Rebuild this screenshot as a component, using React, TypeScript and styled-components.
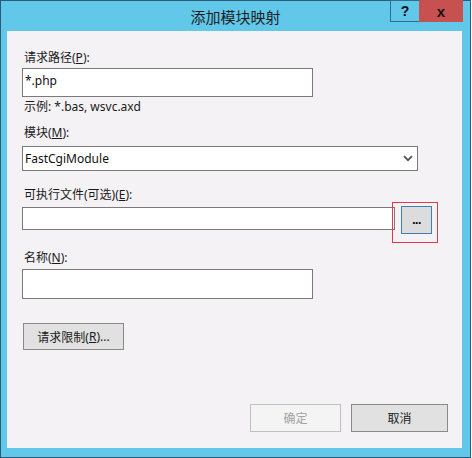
import React from "react";
import styled, { createGlobalStyle } from "styled-components";

const Global = createGlobalStyle`
  html, body { margin: 0; padding: 0; background: #ffffff; }
  body { font-family: "Noto Sans", "Noto Sans CJK SC", sans-serif; }
`;

const Window = styled.div`
  box-sizing: border-box;
  width: 471px;
  height: 458px;
  border: 1px solid #2d5a74;
  background: #61c8ea;
  display: flex;
  flex-direction: column;
  padding: 0 8px 9px 6px;
`;

const TitleBar = styled.div`
  height: 30px;
  flex: none;
  display: grid;
  grid-template-columns: 1fr auto 1fr;
  margin-right: -1px;
`;

const Title = styled.div`
  grid-column: 2;
  align-self: center;
  font-family: "Noto Sans CJK SC", sans-serif;
  font-size: 15px;
  color: #1e1e1e;
  padding-top: 1px;
  margin-left: 1px;
`;

const Caption = styled.div`
  grid-column: 3;
  justify-self: end;
  align-self: start;
  display: flex;
  margin-top: -1px;
`;

const CaptionButton = styled.div<{ $close?: boolean }>`
  box-sizing: border-box;
  width: ${(p) => (p.$close ? "44px" : "29px")};
  height: 22px;
  display: flex;
  align-items: center;
  justify-content: center;
  background: ${(p) => (p.$close ? "#c75050" : "transparent")};
  border: 1px solid ${(p) => (p.$close ? "#c75050" : "#2f6e8c")};
  border-right: ${(p) => (p.$close ? "1px solid #c75050" : "none")};
  font-family: "Liberation Sans", sans-serif;
  font-weight: bold;
  font-size: ${(p) => (p.$close ? "15px" : "14px")};
  color: #111111;
  line-height: 1;
`;

const Content = styled.div`
  flex: 1;
  background: #f4f2f5;
  display: flex;
  flex-direction: column;
  align-items: flex-start;
  padding: 19px 14px 16px 15px;
  box-sizing: border-box;
`;

const Label = styled.div<{ $gap: number }>`
  margin-top: ${(p) => p.$gap}px;
  padding-left: 2px;
  font-family: "Noto Sans", "Noto Sans CJK SC", sans-serif;
  font-size: 12px;
  line-height: 16px;
  color: #1a1a1a;
  u { text-decoration: underline; text-underline-offset: 1px; }
`;

const TextBox = styled.div<{ $w: number; $h: number; $gap: number }>`
  box-sizing: border-box;
  width: ${(p) => p.$w}px;
  height: ${(p) => p.$h}px;
  margin-top: ${(p) => p.$gap}px;
  background: #ffffff;
  border: 1px solid #7a7a7a;
  padding: 4px 2px;
  font-family: "Noto Sans", sans-serif;
  font-size: 12px;
  line-height: 16px;
  color: #111;
  flex: none;
`;

const Select = styled.div`
  box-sizing: border-box;
  width: 396px;
  height: 25px;
  margin-top: 5px;
  background: #ffffff;
  border: 1px solid #7a7a7a;
  display: flex;
  align-items: center;
  justify-content: space-between;
  padding: 0 4px 0 2px;
  font-family: "Noto Sans", sans-serif;
  font-size: 12px;
  color: #111;
`;

const Row = styled.div`
  margin-top: 3px;
  display: flex;
  align-items: flex-start;
  gap: 6px;
`;

const BrowseWrap = styled.div`
  position: relative;
`;

const Highlight = styled.div`
  position: absolute;
  left: -9px;
  top: -4px;
  width: 46px;
  height: 41px;
  box-sizing: border-box;
  border: 1px solid #e0394e;
  pointer-events: none;
`;

const BrowseButton = styled.div`
  box-sizing: border-box;
  width: 31px;
  height: 28px;
  background: #dcdcdc;
  border: 1px solid #3c7fb1;
  display: flex;
  align-items: center;
  justify-content: center;
  font-family: "Liberation Sans", sans-serif;
  font-weight: bold;
  font-size: 12px;
  letter-spacing: -0.5px;
  color: #000;
  padding-bottom: 1px;
`;

const Button = styled.div<{ $w: number; $disabled?: boolean }>`
  box-sizing: border-box;
  width: ${(p) => p.$w}px;
  height: 28px;
  display: flex;
  align-items: center;
  justify-content: center;
  background: ${(p) => (p.$disabled ? "#f4f4f4" : "#e1e1e1")};
  border: 1px solid ${(p) => (p.$disabled ? "#bfbfbf" : "#8a8a8a")};
  font-family: "Noto Sans", "Noto Sans CJK SC", sans-serif;
  font-size: 12px;
  color: ${(p) => (p.$disabled ? "#a3a3a3" : "#1a1a1a")};
  u { text-decoration: underline; text-underline-offset: 1px; }
`;

const LimitButton = styled(Button)`
  margin-top: 24px;
  margin-left: 1px;
  height: 27px;
`;

const Footer = styled.div`
  margin-top: auto;
  align-self: flex-end;
  display: flex;
  gap: 10px;
`;

const Chevron = () => (
  <svg width="10" height="7" viewBox="0 0 10 7">
    <path d="M1 1.2 L5 5.2 L9 1.2" fill="none" stroke="#555" strokeWidth="1.8" />
  </svg>
);

export default function App() {
  return (
    <>
      <Global />
      <Window>
        <TitleBar>
          <Title>添加模块映射</Title>
          <Caption>
            <CaptionButton>?</CaptionButton>
            <CaptionButton $close>x</CaptionButton>
          </Caption>
        </TitleBar>
        <Content>
          <Label $gap={0}>
            请求路径(<u>P</u>):
          </Label>
          <TextBox $w={291} $h={29} $gap={2}>
            *.php
          </TextBox>
          <Label $gap={2}>示例: *.bas, wsvc.axd</Label>
          <Label $gap={10}>
            模块(<u>M</u>):
          </Label>
          <Select>
            <span>FastCgiModule</span>
            <Chevron />
          </Select>
          <Label $gap={16}>
            可执行文件(可选)(<u>E</u>):
          </Label>
          <Row>
            <TextBox $w={373} $h={23} $gap={1} />
            <BrowseWrap>
              <BrowseButton>...</BrowseButton>
              <Highlight />
            </BrowseWrap>
          </Row>
          <Label $gap={16}>
            名称(<u>N</u>):
          </Label>
          <TextBox $w={291} $h={30} $gap={3} />
          <LimitButton $w={101}>
            请求限制(<u>R</u>)...
          </LimitButton>
          <Footer>
            <Button $w={91} $disabled>
              确定
            </Button>
            <Button $w={97}>取消</Button>
          </Footer>
        </Content>
      </Window>
    </>
  );
}
